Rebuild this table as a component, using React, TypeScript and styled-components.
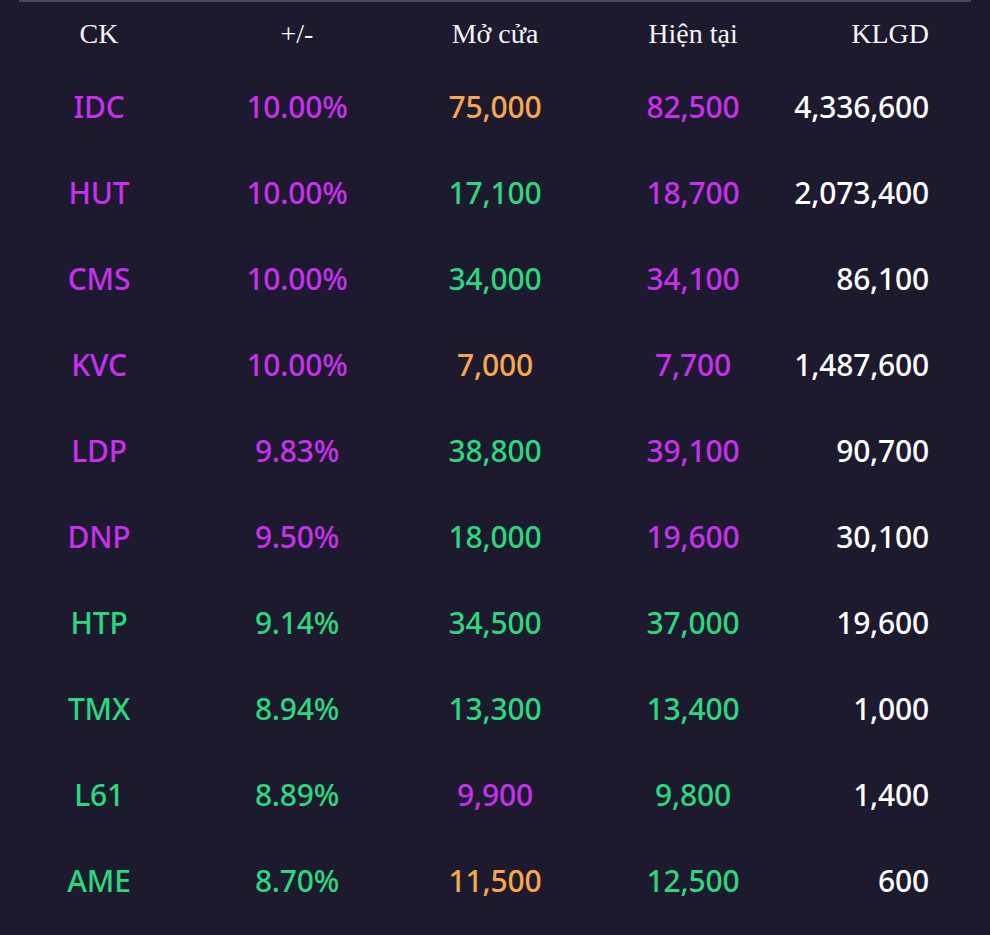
import { FC } from 'react'
import styled, { createGlobalStyle } from 'styled-components'

type Tone = 'up' | 'ceil' | 'ref' | 'plain'

type Quote = {
	code: string
	change: string
	open: string
	openTone: Tone
	last: string
	volume: string
	tone: Tone
}

const quotes: Quote[] = [
	{ code: 'IDC', change: '10.00%', open: '75,000', openTone: 'ref', last: '82,500', volume: '4,336,600', tone: 'ceil' },
	{ code: 'HUT', change: '10.00%', open: '17,100', openTone: 'up', last: '18,700', volume: '2,073,400', tone: 'ceil' },
	{ code: 'CMS', change: '10.00%', open: '34,000', openTone: 'up', last: '34,100', volume: '86,100', tone: 'ceil' },
	{ code: 'KVC', change: '10.00%', open: '7,000', openTone: 'ref', last: '7,700', volume: '1,487,600', tone: 'ceil' },
	{ code: 'LDP', change: '9.83%', open: '38,800', openTone: 'up', last: '39,100', volume: '90,700', tone: 'ceil' },
	{ code: 'DNP', change: '9.50%', open: '18,000', openTone: 'up', last: '19,600', volume: '30,100', tone: 'ceil' },
	{ code: 'HTP', change: '9.14%', open: '34,500', openTone: 'up', last: '37,000', volume: '19,600', tone: 'up' },
	{ code: 'TMX', change: '8.94%', open: '13,300', openTone: 'up', last: '13,400', volume: '1,000', tone: 'up' },
	{ code: 'L61', change: '8.89%', open: '9,900', openTone: 'ceil', last: '9,800', volume: '1,400', tone: 'up' },
	{ code: 'AME', change: '8.70%', open: '11,500', openTone: 'ref', last: '12,500', volume: '600', tone: 'up' }
]

const toneColors: Record<Tone, string> = {
	up: '#2bd97c',
	ceil: '#c730ec',
	ref: '#f7a84c',
	plain: '#ffffff'
}

const GlobalStyle = createGlobalStyle`
	html, body {
		margin: 0;
		padding: 0;
		background: #1d1a2f;
	}
`

const App: FC = () => {
	return (
		<>
			<GlobalStyle />
			<Board>
				<TopRule />
				<Table>
					<HeadRow>
						<HeadCell>CK</HeadCell>
						<HeadCell>+/-</HeadCell>
						<HeadCell>Mở cửa</HeadCell>
						<HeadCell>Hiện tại</HeadCell>
						<HeadCell alignEnd>KLGD</HeadCell>
					</HeadRow>
					{quotes.map((q) => (
						<Row key={q.code}>
							<Cell tone={q.tone}>{q.code}</Cell>
							<Cell tone={q.tone}>{q.change}</Cell>
							<Cell tone={q.openTone}>{q.open}</Cell>
							<Cell tone={q.tone}>{q.last}</Cell>
							<Cell tone='plain' alignEnd>
								{q.volume}
							</Cell>
						</Row>
					))}
				</Table>
			</Board>
		</>
	)
}

const Board = styled.div`
	width: 990px;
	height: 935px;
	background: #1d1a2f;
	overflow: hidden;
`

const TopRule = styled.div`
	height: 2px;
	margin: 0 19px;
	background: #4a475c;
`

const Table = styled.div`
	display: flex;
	flex-direction: column;
`

const HeadRow = styled.div`
	display: grid;
	grid-template-columns: repeat(5, 198px);
	align-items: center;
	height: 62px;
`

const HeadCell = styled.div<{ alignEnd?: boolean }>`
	color: #f4f4f6;
	font-family: 'Liberation Serif', 'Times New Roman', serif;
	font-size: 28px;
	line-height: 1;
	padding-top: 2px;
	text-align: ${(props) => (props.alignEnd ? 'right' : 'center')};
	padding-right: ${(props) => (props.alignEnd ? '61px' : '0')};
`

const Row = styled.div`
	display: grid;
	grid-template-columns: repeat(5, 198px);
	height: 86px;
	align-items: center;
`

const Cell = styled.div<{ tone: Tone; alignEnd?: boolean }>`
	color: ${(props) => toneColors[props.tone]};
	font-family: 'Noto Sans', 'Open Sans', sans-serif;
	font-size: 30px;
	font-weight: 500;
	letter-spacing: -0.2px;
	line-height: 86px;
	text-align: ${(props) => (props.alignEnd ? 'right' : 'center')};
	padding-right: ${(props) => (props.alignEnd ? '61px' : '0')};
`

export default App
